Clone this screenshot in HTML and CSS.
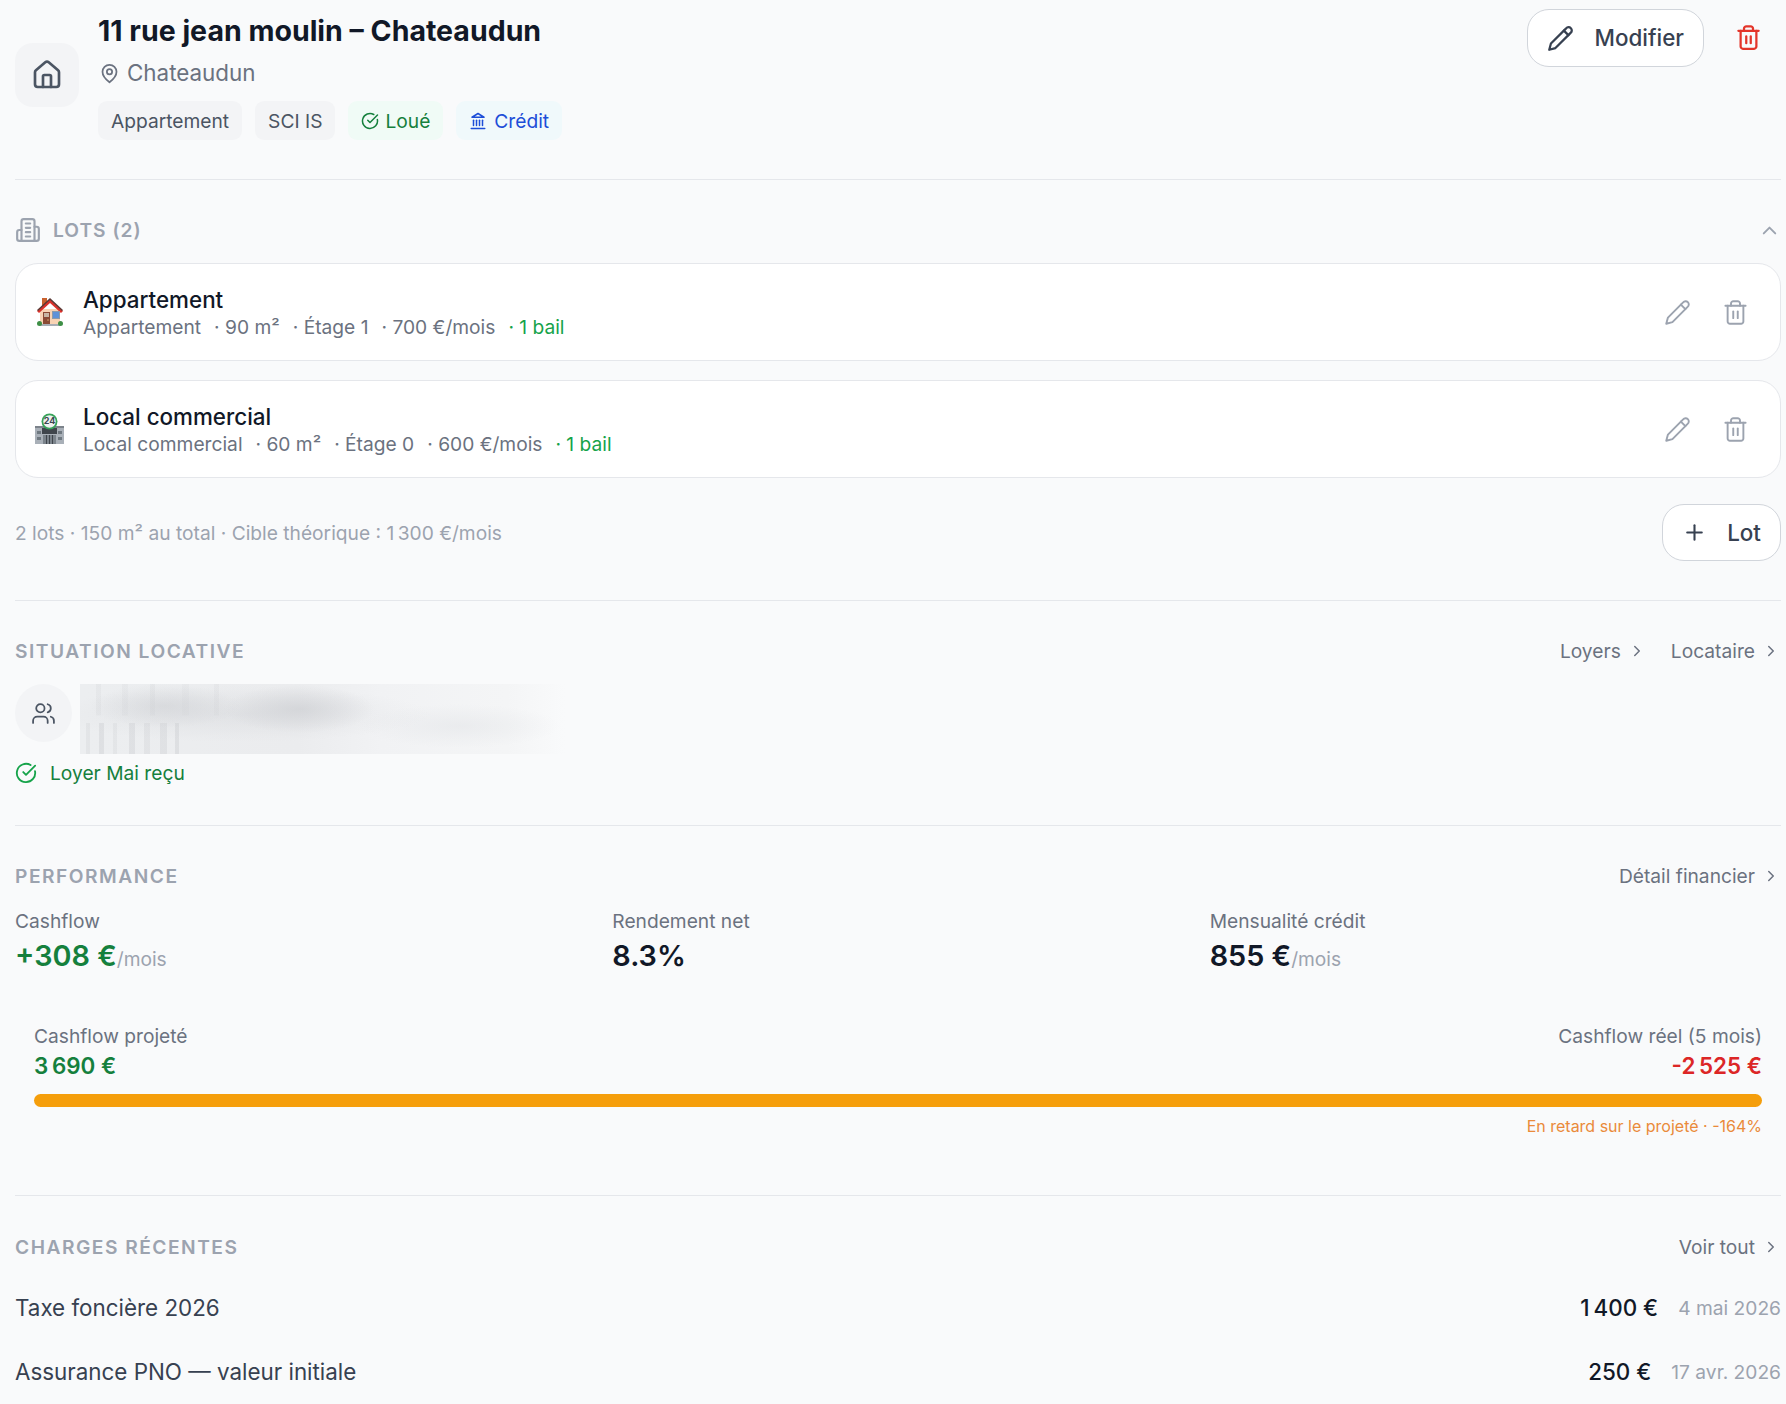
FILE: index.html
```html
<!DOCTYPE html>
<html lang="fr">
<head>
    <meta charset="UTF-8">
    <meta name="viewport" content="width=device-width, initial-scale=1.0">
    <title>11 rue jean moulin - Chateaudun</title>
    <link rel="stylesheet" href="styles.css">
</head>
<body>

    <svg class="sprite" xmlns="http://www.w3.org/2000/svg">
        <symbol id="i-house" viewBox="0 0 24 24"><path d="M15 21v-8a1 1 0 0 0-1-1h-4a1 1 0 0 0-1 1v8"/><path d="M3 10a2 2 0 0 1 .709-1.528l7-5.999a2 2 0 0 1 2.582 0l7 5.999A2 2 0 0 1 21 10v9a2 2 0 0 1-2 2H5a2 2 0 0 1-2-2z"/></symbol>
        <symbol id="i-pin" viewBox="0 0 24 24"><path d="M20 10c0 6-8 12-8 12s-8-6-8-12a8 8 0 0 1 16 0Z"/><circle cx="12" cy="10" r="3"/></symbol>
        <symbol id="i-check" viewBox="0 0 24 24"><path d="M21.801 10A10 10 0 1 1 17 3.335"/><path d="m9 11 3 3L22 4"/></symbol>
        <symbol id="i-bank" viewBox="0 0 24 24"><line x1="3" x2="21" y1="22" y2="22"/><line x1="6" x2="6" y1="18" y2="11"/><line x1="10" x2="10" y1="18" y2="11"/><line x1="14" x2="14" y1="18" y2="11"/><line x1="18" x2="18" y1="18" y2="11"/><polygon points="12 2 20 7 4 7"/></symbol>
        <symbol id="i-building" viewBox="0 0 24 24"><path d="M6 22V4a2 2 0 0 1 2-2h8a2 2 0 0 1 2 2v18Z"/><path d="M6 12H4a2 2 0 0 0-2 2v6a2 2 0 0 0 2 2h2"/><path d="M18 9h2a2 2 0 0 1 2 2v9a2 2 0 0 1-2 2h-2"/><path d="M10 6h4"/><path d="M10 10h4"/><path d="M10 14h4"/><path d="M10 18h4"/></symbol>
        <symbol id="i-pencil" viewBox="0 0 24 24"><path d="M17 3a2.85 2.83 0 1 1 4 4L7.5 20.5 2 22l1.5-5.5Z"/><path d="m15 5 4 4"/></symbol>
        <symbol id="i-trash" viewBox="0 0 24 24"><path d="M3 6h18"/><path d="M19 6v14c0 1-1 2-2 2H7c-1 0-2-1-2-2V6"/><path d="M8 6V4c0-1 1-2 2-2h4c1 0 2 1 2 2v2"/><line x1="10" x2="10" y1="11" y2="17"/><line x1="14" x2="14" y1="11" y2="17"/></symbol>
        <symbol id="i-users" viewBox="0 0 24 24"><path d="M16 21v-2a4 4 0 0 0-4-4H6a4 4 0 0 0-4 4v2"/><circle cx="9" cy="7" r="4"/><path d="M22 21v-2a4 4 0 0 0-3-3.87"/><path d="M16 3.13a4 4 0 0 1 0 7.75"/></symbol>
        <symbol id="i-plus" viewBox="0 0 24 24"><path d="M5 12h14"/><path d="M12 5v14"/></symbol>
        <symbol id="i-right" viewBox="0 0 24 24"><path d="m9 18 6-6-6-6"/></symbol>
        <symbol id="i-up" viewBox="0 0 24 24"><path d="m18 15-6-6-6 6"/></symbol>
    </svg>

    <div class="page">

        <header class="top section">
            <div class="top__icon"><svg class="icon icon--house"><use href="#i-house"/></svg></div>
            <div class="top__info">
                <h1 class="top__title">11 rue jean moulin – Chateaudun</h1>
                <p class="top__place"><svg class="icon icon--pin"><use href="#i-pin"/></svg>Chateaudun</p>
                <div class="chips">
                    <span class="chip">Appartement</span>
                    <span class="chip">SCI IS</span>
                    <span class="chip chip--green"><svg class="icon icon--chip"><use href="#i-check"/></svg>Loué</span>
                    <span class="chip chip--blue"><svg class="icon icon--chip"><use href="#i-bank"/></svg>Crédit</span>
                </div>
            </div>
            <div class="top__actions">
                <button class="btn btn--edit"><svg class="icon icon--btn"><use href="#i-pencil"/></svg>Modifier</button>
                <svg class="icon icon--delete"><use href="#i-trash"/></svg>
            </div>
        </header>

        <section class="section lots">
            <div class="lots__head">
                <svg class="icon icon--building"><use href="#i-building"/></svg>
                <h2 class="label">LOTS (2)</h2>
                <svg class="icon icon--up"><use href="#i-up"/></svg>
            </div>

            <div class="lot">
                <!-- house emoji -->
                <svg class="lot__emoji" viewBox="0 0 29 32">
                    <rect x="7" y="2" width="5" height="8" fill="#c9622f"/>
                    <rect x="5" y="13" width="20" height="16" fill="#f8d3b4"/>
                    <path d="M15 3 L28 15 L26 17 L15 7 L4 17 L2 15 Z" fill="#d9322b"/>
                    <path d="M15 2 L28 14 L27 15 L15 4 L3 15 L2 14 Z" fill="#5a3a36"/>
                    <rect x="8" y="16" width="7" height="13" fill="#8a4a34"/>
                    <rect x="9" y="17" width="5" height="4" fill="#c8b6a4"/>
                    <circle cx="13" cy="24" r=".7" fill="#e8c27a"/>
                    <rect x="17" y="15" width="8" height="8" fill="#8e9aa8"/>
                    <rect x="18" y="16" width="6" height="6" fill="#5f92d8"/>
                    <rect x="5" y="28" width="20" height="2" fill="#a7adb5"/>
                    <circle cx="4.5" cy="27.5" r="2.5" fill="#3e8f46"/>
                    <circle cx="25.5" cy="27.5" r="2.5" fill="#3e8f46"/>
                </svg>
                <div class="lot__text">
                    <div class="lot__name">Appartement</div>
                    <div class="lot__meta"><span>Appartement</span><span>· 90 m²</span><span>· Étage 1</span><span>· 700 €/mois</span><span class="lot__bail">· 1 bail</span></div>
                </div>
                <div class="lot__actions">
                    <svg class="icon icon--lot"><use href="#i-pencil"/></svg>
                    <svg class="icon icon--lot"><use href="#i-trash"/></svg>
                </div>
            </div>

            <div class="lot lot--next">
                <!-- convenience store emoji -->
                <svg class="lot__emoji" viewBox="0 0 29 32">
                    <rect x="0" y="13" width="29" height="18" fill="#a9b0b8"/>
                    <rect x="0" y="13" width="29" height="2" fill="#7c838b"/>
                    <rect x="2" y="18" width="4" height="3" fill="#6f7880"/>
                    <rect x="2" y="24" width="4" height="3" fill="#6f7880"/>
                    <rect x="23" y="18" width="4" height="3" fill="#6f7880"/>
                    <rect x="23" y="24" width="4" height="3" fill="#6f7880"/>
                    <rect x="7" y="15" width="15" height="6" fill="#3f454c"/>
                    <rect x="8" y="22" width="13" height="9" fill="#7b838b"/>
                    <rect x="11" y="22" width="1" height="9" fill="#3f454c"/>
                    <rect x="14" y="22" width="1" height="9" fill="#3f454c"/>
                    <rect x="17" y="22" width="1" height="9" fill="#3f454c"/>
                    <circle cx="14.5" cy="8.5" r="8" fill="#38a35a"/>
                    <circle cx="14.5" cy="8.5" r="6.2" fill="#eef1f0"/>
                    <text class="lot__sign" x="14.5" y="11.4" text-anchor="middle">24</text>
                </svg>
                <div class="lot__text">
                    <div class="lot__name">Local commercial</div>
                    <div class="lot__meta"><span>Local commercial</span><span>· 60 m²</span><span>· Étage 0</span><span>· 600 €/mois</span><span class="lot__bail">· 1 bail</span></div>
                </div>
                <div class="lot__actions">
                    <svg class="icon icon--lot"><use href="#i-pencil"/></svg>
                    <svg class="icon icon--lot"><use href="#i-trash"/></svg>
                </div>
            </div>

            <div class="lots__foot">
                <span class="lots__total">2 lots · 150 m² au total · Cible théorique : 1&#8239;300 €/mois</span>
                <button class="btn btn--lot"><svg class="icon icon--plus"><use href="#i-plus"/></svg>Lot</button>
            </div>
        </section>

        <section class="section rent">
            <div class="head">
                <h2 class="label">SITUATION LOCATIVE</h2>
                <div class="head__links">
                    <a class="link">Loyers<svg class="icon icon--right"><use href="#i-right"/></svg></a>
                    <a class="link">Locataire<svg class="icon icon--right"><use href="#i-right"/></svg></a>
                </div>
            </div>
            <div class="tenant">
                <div class="tenant__icon"><svg class="icon icon--users"><use href="#i-users"/></svg></div>
                <div class="tenant__blur"></div>
            </div>
            <div class="received"><svg class="icon icon--received"><use href="#i-check"/></svg>Loyer Mai reçu</div>
        </section>

        <section class="section perf">
            <div class="head">
                <h2 class="label">PERFORMANCE</h2>
                <a class="link">Détail financier<svg class="icon icon--right"><use href="#i-right"/></svg></a>
            </div>
            <div class="stats">
                <div>
                    <div class="stat__label">Cashflow</div>
                    <div class="stat__value stat__value--green">+308 €<small>/mois</small></div>
                </div>
                <div>
                    <div class="stat__label">Rendement net</div>
                    <div class="stat__value">8.3%</div>
                </div>
                <div>
                    <div class="stat__label">Mensualité crédit</div>
                    <div class="stat__value">855 €<small>/mois</small></div>
                </div>
            </div>
            <div class="compare">
                <div class="compare__row">
                    <div>
                        <div class="stat__label">Cashflow projeté</div>
                        <div class="compare__value compare__value--green">3&#8239;690 €</div>
                    </div>
                    <div class="compare__end">
                        <div class="stat__label">Cashflow réel (5 mois)</div>
                        <div class="compare__value compare__value--red">-2&#8239;525 €</div>
                    </div>
                </div>
                <div class="bar"></div>
                <div class="compare__note">En retard sur le projeté · -164%</div>
            </div>
        </section>

        <section class="charges">
            <div class="head">
                <h2 class="label">CHARGES RÉCENTES</h2>
                <a class="link">Voir tout<svg class="icon icon--right"><use href="#i-right"/></svg></a>
            </div>
            <div class="charge">
                <span class="charge__name">Taxe foncière 2026</span>
                <span class="charge__amount">1&#8239;400 €</span>
                <span class="charge__date">4 mai 2026</span>
            </div>
            <div class="charge">
                <span class="charge__name">Assurance PNO — valeur initiale</span>
                <span class="charge__amount">250 €</span>
                <span class="charge__date">17 avr. 2026</span>
            </div>
        </section>

    </div>

</body>
</html>
```

FILE: styles.css
```css
html, body {
    margin: 0;
    height: 100%;
    overflow: hidden;
}

body {
    background: #f9fafb;
    color: #111827;
    font: 400 19.2px/24px Inter, "Noto Sans", sans-serif;
}

h1, h2, p {
    margin: 0;
}

.sprite {
    display: none;
}

.icon {
    display: block;
    flex: none;
    fill: none;
    stroke: currentColor;
    stroke-width: 2;
    stroke-linecap: round;
    stroke-linejoin: round;
}

.page {
    padding: 9px 5px 0 15px;
}

.section {
    border-bottom: 1px solid #e5e7eb;
}

/* header */
.top {
    display: flex;
    align-items: flex-start;
    gap: 19px;
    padding-bottom: 39px;
}

.top__icon {
    width: 64px;
    height: 64px;
    margin-top: 34px;
    display: flex;
    align-items: center;
    justify-content: center;
    background: #f3f4f6;
    border-radius: 18px;
    color: #4b5563;
}

.icon--house {
    width: 32px;
    height: 32px;
}

.top__info {
    flex: 1;
}

.top__title {
    font-size: 28.5px;
    line-height: 44px;
    font-weight: 700;
    color: #111827;
}

.top__place {
    display: flex;
    align-items: center;
    gap: 7px;
    margin-top: 7px;
    font-size: 22.4px;
    line-height: 26px;
    color: #6b7280;
}

.icon--pin {
    width: 21px;
    height: 21px;
    margin-left: 1px;
}

.chips {
    display: flex;
    gap: 13px;
    margin-top: 15px;
}

.chip {
    display: flex;
    align-items: center;
    gap: 6px;
    height: 39px;
    padding: 0 13px;
    background: #f3f4f6;
    border-radius: 9px;
    color: #4b5563;
}

.chip--green {
    background: #f0fbf6;
    color: #15803d;
}

.chip--blue {
    gap: 7px;
    background: #f0f9fb;
    color: #1d4ed8;
}

.icon--chip {
    width: 18px;
    height: 18px;
}

.top__actions {
    display: flex;
    align-items: center;
    gap: 31px;
    padding-right: 19px;
}

.btn {
    display: flex;
    align-items: center;
    background: #fff;
    border: 1px solid #d1d5db;
    font: 500 22.4px/26px Inter, "Noto Sans", sans-serif;
    color: #374151;
}

.btn--edit {
    gap: 21px;
    height: 58px;
    padding: 0 19px;
    border-radius: 22px;
}

.icon--btn {
    width: 27px;
    height: 27px;
}

.icon--delete {
    width: 27px;
    height: 27px;
    margin-bottom: 2px;
    color: #e3352a;
}

/* lots */
.lots {
    padding: 38px 0 39px;
}

.lots__head {
    display: flex;
    align-items: center;
    gap: 12px;
    height: 24px;
    color: #9ca3af;
}

.lots__head .label {
    letter-spacing: 1px;
}

.icon--building {
    width: 26px;
    height: 26px;
}

.icon--up {
    width: 23px;
    height: 23px;
    margin-left: auto;
}

.label {
    font-size: 19.2px;
    line-height: 24px;
    font-weight: 600;
    letter-spacing: 1.5px;
    color: #9ca3af;
}

.lot {
    display: flex;
    align-items: center;
    height: 98px;
    box-sizing: border-box;
    margin-top: 21px;
    padding: 0 31px 0 19px;
    background: #fff;
    border: 1px solid #e5e7eb;
    border-radius: 23px;
}

.lot--next {
    margin-top: 19px;
}

.lot__emoji {
    flex: none;
    width: 29px;
    height: 32px;
    margin-right: 19px;
}

.lot__sign {
    font: 700 9px Inter, sans-serif;
    fill: #3b4650;
}

.lot__text {
    flex: 1;
}

.lot__name {
    font-size: 22.4px;
    line-height: 29px;
    font-weight: 500;
    color: #111827;
}

.lot__meta {
    display: flex;
    gap: 13px;
    line-height: 26px;
    color: #6b7280;
}

.lot__bail {
    color: #16a34a;
}

.lot__actions {
    display: flex;
    gap: 31px;
    color: #9ca3af;
}

.icon--lot {
    width: 27px;
    height: 27px;
    stroke-width: 1.7;
}

.lots__foot {
    display: flex;
    align-items: center;
    justify-content: space-between;
    margin-top: 26px;
}

.lots__total {
    color: #9ca3af;
}

.btn--lot {
    gap: 20px;
    height: 57px;
    padding: 0 19px;
    border-radius: 22px;
}

.icon--plus {
    width: 25px;
    height: 25px;
}

/* section heads */
.head {
    display: flex;
    align-items: center;
    justify-content: space-between;
    height: 24px;
}

.head__links {
    display: flex;
    gap: 24px;
}

.link {
    display: flex;
    align-items: center;
    gap: 7px;
    padding-right: 1px;
    color: #6b7280;
}

.icon--right {
    width: 18px;
    height: 18px;
}

/* rent */
.rent {
    padding: 38px 0 40px;
}

.tenant {
    display: flex;
    gap: 8px;
    margin-top: 21px;
}

.tenant__icon {
    width: 57px;
    height: 58px;
    display: flex;
    align-items: center;
    justify-content: center;
    background: #f3f4f6;
    border-radius: 50%;
    color: #4b5563;
}

.icon--users {
    width: 25px;
    height: 25px;
    stroke-width: 1.7;
}

/* tenant name is blurred out in the source */
.tenant__blur {
    width: 485px;
    height: 70px;
    background:
        radial-gradient(ellipse 75px 24px at 219px 25px, rgba(200, 202, 206, .55), transparent),
        radial-gradient(ellipse 75px 22px at 85px 22px, rgba(200, 202, 206, .45), transparent),
        radial-gradient(ellipse 190px 28px at 160px 30px, rgba(205, 207, 211, .35), transparent),
        radial-gradient(ellipse 100px 22px at 380px 42px, rgba(225, 227, 230, .5), transparent),
        linear-gradient(90deg, transparent 0 6%, rgba(190, 192, 196, .2) 6% 10%, transparent 10% 18%, rgba(190, 192, 196, .3) 18% 23%, transparent 23% 32%, rgba(190, 192, 196, .18) 32% 36%, transparent 36% 48%, rgba(190, 192, 196, .28) 48% 53%, transparent 53% 62%, rgba(190, 192, 196, .22) 62% 68%, transparent 68% 78%, rgba(190, 192, 196, .26) 78% 84%, transparent 84% 92%, rgba(190, 192, 196, .3) 92% 96%, transparent 96%) 0 100% / 103px 45% no-repeat,
        linear-gradient(90deg, transparent 0 10%, rgba(190, 192, 196, .14) 10% 13%, transparent 13% 26%, rgba(190, 192, 196, .12) 26% 30%, transparent 30% 44%, rgba(190, 192, 196, .14) 44% 47%, transparent 47% 64%, rgba(190, 192, 196, .1) 64% 68%, transparent 68% 84%, rgba(190, 192, 196, .12) 84% 87%, transparent 87%) 0 0 / 160px 45% no-repeat,
        linear-gradient(90deg, #eceef0 0, #ebecee 45%, #f1f2f4 62%, #f4f5f6 88%, #f9fafb 100%);
}

.received {
    display: flex;
    align-items: center;
    gap: 13px;
    margin-top: 7px;
    color: #15803d;
}

.icon--received {
    width: 22px;
    height: 22px;
    color: #16a34a;
}

/* performance */
.perf {
    padding: 38px 0 59px;
}

.stats {
    display: grid;
    grid-template-columns: repeat(3, 1fr);
    gap: 26px;
    margin-top: 21px;
}

.stat__label {
    line-height: 24px;
    color: #6b7280;
}

.stat__value {
    margin-top: 6px;
    font-size: 28.8px;
    line-height: 34px;
    font-weight: 600;
    color: #111827;
}

.stat__value small {
    font-size: 19.2px;
    font-weight: 400;
    color: #9ca3af;
}

.stat__value--green {
    color: #15803d;
}

.compare {
    margin-top: 48px;
    padding: 0 19px;
}

.compare__row {
    display: flex;
    justify-content: space-between;
}

.compare__end {
    text-align: right;
}

.compare__value {
    margin-top: 4px;
    font-size: 22.4px;
    line-height: 28px;
    font-weight: 600;
}

.compare__value--green {
    color: #15803d;
}

.compare__value--red {
    color: #dc2626;
}

.bar {
    height: 13px;
    margin-top: 14px;
    background: #f59e0b;
    border-radius: 7px;
}

.compare__note {
    margin-top: 9px;
    text-align: right;
    font-size: 16px;
    line-height: 20px;
    color: #ea8a3a;
}

/* charges */
.charges {
    padding-top: 39px;
}

.charge {
    display: flex;
    align-items: center;
    gap: 20px;
    height: 24px;
    margin-top: 40px;
    font-size: 22.4px;
    color: #374151;
}

.head + .charge {
    margin-top: 37px;
}

.charge__name {
    flex: 1;
}

.charge__amount {
    font-weight: 500;
    color: #111827;
}

.charge__date {
    font-size: 19.2px;
    color: #9ca3af;
}
```
